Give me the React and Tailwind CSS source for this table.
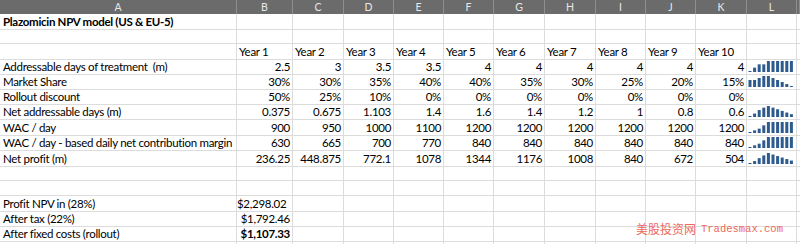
import React from "react";

const COLS = "grid grid-cols-[237px_56px_51px_50px_50px_50px_51px_51px_50px_50px_51px_50px_1fr]";
const LETTERS = ["A", "B", "C", "D", "E", "F", "G", "H", "I", "J", "K", "L", ""];

const rows = [
  { label: "Plazomicin NPV model (US & EU-5)", bold: true, vals: [] },
  { label: "", vals: [] },
  { label: "", vals: ["Year 1", "Year 2", "Year 3", "Year 4", "Year 5", "Year 6", "Year 7", "Year 8", "Year 9", "Year 10"], left: true },
  { label: "Addressable days of treatment  (m)", vals: ["2.5", "3", "3.5", "3.5", "4", "4", "4", "4", "4", "4"], spark: [2.5, 3, 3.5, 3.5, 4, 4, 4, 4, 4, 4] },
  { label: "Market Share", vals: ["30%", "30%", "35%", "40%", "40%", "35%", "30%", "25%", "20%", "15%"], spark: [30, 30, 35, 40, 40, 35, 30, 25, 20, 15] },
  { label: "Rollout discount", vals: ["50%", "25%", "10%", "0%", "0%", "0%", "0%", "0%", "0%", "0%"] },
  { label: "Net addressable days (m)", tall: true, vals: ["0.375", "0.675", "1.103", "1.4", "1.6", "1.4", "1.2", "1", "0.8", "0.6"], spark: [0.375, 0.675, 1.103, 1.4, 1.6, 1.4, 1.2, 1, 0.8, 0.6] },
  { label: "WAC / day", vals: ["900", "950", "1000", "1100", "1200", "1200", "1200", "1200", "1200", "1200"], spark: [900, 950, 1000, 1100, 1200, 1200, 1200, 1200, 1200, 1200] },
  { label: "WAC / day - based daily net contribution margin", tall: true, vals: ["630", "665", "700", "770", "840", "840", "840", "840", "840", "840"], spark: [630, 665, 700, 770, 840, 840, 840, 840, 840, 840] },
  { label: "Net profit (m)", vals: ["236.25", "448.875", "772.1", "1078", "1344", "1176", "1008", "840", "672", "504"], spark: [236.25, 448.875, 772.1, 1078, 1344, 1176, 1008, 840, 672, 504] },
  { label: "", vals: [] },
  { label: "", vals: [] },
  { label: "Profit NPV in (28%)", vals: ["$2,298.02  "] },
  { label: "After tax (22%)", vals: ["$1,792.46"] },
  { label: "After fixed costs (rollout)", vals: ["$1,107.33"], boldVal: true },
  { label: "", vals: [] },
];

function Spark({ data }) {
  const min = Math.min(...data);
  const max = Math.max(...data);
  return (
    <svg width="50" height="15" viewBox="0 0 50 15" className="block">
      {data.map((v, i) => {
        const h = 1 + ((v - min) / (max - min)) * 10;
        return <rect key={i} x={1.5 + i * 4.6} y={13 - h} width="3" height={h} fill="#2e5b8e" />;
      })}
    </svg>
  );
}

export default function App() {
  return (
    <div className="relative w-[800px] h-[244px] overflow-hidden bg-white text-black" style={{ fontFamily: "Lato, 'Open Sans', sans-serif" }}>
      <div className={`${COLS} h-[14px] bg-[#6b6b6b]`}>
        {LETTERS.map((l, i) => (
          <div key={i} className="border-r border-[#8e8e8e] flex items-center justify-center text-[10.5px] leading-none text-[#e8e8e8]">
            {l}
          </div>
        ))}
      </div>
      {rows.map((r, ri) => (
        <div key={ri} className={`${COLS} ${r.tall ? "h-[16px]" : "h-[15px]"} text-[11.5px] tracking-[-0.3px] leading-[15px]`}>
          <div className={`border-r border-b border-[#dcdcdc] pl-[3px] whitespace-pre overflow-visible ${r.bold ? "font-bold" : ""}`}>
            {r.label}
          </div>
          {Array.from({ length: 10 }).map((_, ci) => {
            const v = r.vals[ci];
            return (
              <div
                key={ci}
                className={`border-r border-b border-[#dcdcdc] whitespace-pre ${r.left ? "text-left pl-[2px]" : "text-right pr-[2px]"} ${r.boldVal ? "font-bold" : ""}`}
              >
                {v || ""}
              </div>
            );
          })}
          <div className="border-r border-b border-[#dcdcdc]">{r.spark ? <Spark data={r.spark} /> : null}</div>
          <div className="border-b border-[#dcdcdc]"></div>
        </div>
      ))}
      <div className="absolute left-[636px] top-[221px] flex items-center gap-[5px] text-[#ec6a5e] whitespace-nowrap">
        <span className="text-[12px] leading-[16px]" style={{ fontFamily: "'Noto Sans CJK SC', sans-serif" }}>美股投资网</span>
        <span className="text-[10.5px] leading-[16px]" style={{ fontFamily: "'Liberation Mono', monospace" }}>Tradesmax.com</span>
      </div>
    </div>
  );
}
